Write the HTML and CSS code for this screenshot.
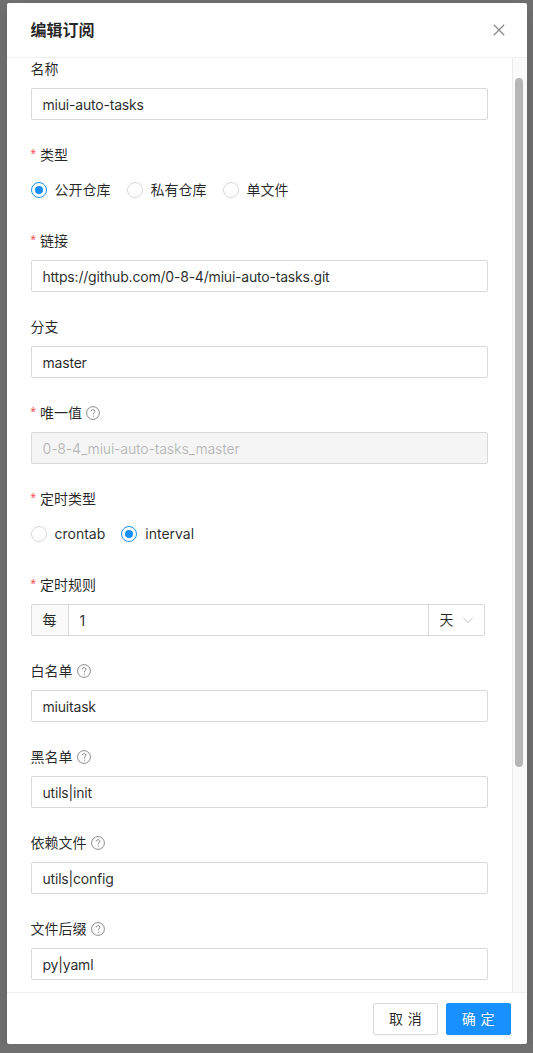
FILE: index.html
```html
<!DOCTYPE html>
<html lang="zh-CN">
  <head>
    <meta charset="UTF-8" />
    <meta name="viewport" content="width=device-width, initial-scale=1.0" />
    <title>编辑订阅</title>
    <link rel="stylesheet" href="styles.css">
  </head>
  <body>
    <div class="modal">
      <div class="modal-header">
        <div class="modal-title">编辑订阅</div>
        <button class="modal-close" type="button" aria-label="关闭">
          <svg width="12" height="12" viewBox="0 0 12 12">
            <path d="M0.8 0.8 L11.2 11.2 M11.2 0.8 L0.8 11.2" stroke="currentColor" stroke-width="1.3" fill="none" />
          </svg>
        </button>
      </div>

      <div class="modal-body">
        <div class="modal-scroll">
          <form class="form">
            <div class="form-item">
              <div class="form-label"><label>名称</label></div>
              <input class="input" type="text" value="miui-auto-tasks" />
            </div>

            <div class="form-item">
              <div class="form-label"><label class="required">类型</label></div>
              <div class="radio-group">
                <label class="radio checked"><span class="radio-dot"></span><span>公开仓库</span></label>
                <label class="radio"><span class="radio-dot"></span><span>私有仓库</span></label>
                <label class="radio"><span class="radio-dot"></span><span>单文件</span></label>
              </div>
            </div>

            <div class="form-item">
              <div class="form-label"><label class="required">链接</label></div>
              <input class="input" type="text" value="https://github.com/0-8-4/miui-auto-tasks.git" />
            </div>

            <div class="form-item">
              <div class="form-label"><label>分支</label></div>
              <input class="input" type="text" value="master" />
            </div>

            <div class="form-item">
              <div class="form-label">
                <label class="required">唯一值</label>
                <svg class="help-icon" width="14" height="14" viewBox="0 0 14 14">
                  <circle cx="7" cy="7" r="6.4" stroke="currentColor" stroke-width="1" fill="none" />
                  <path d="M5.1 5.4 C5.1 4.3 6 3.7 7 3.7 C8.1 3.7 8.9 4.4 8.9 5.3 C8.9 6.5 7.4 6.6 7.4 7.9 L7.4 8.4" stroke="currentColor" stroke-width="1" fill="none" />
                  <circle cx="7.4" cy="10.2" r="0.65" fill="currentColor" />
                </svg>
              </div>
              <input class="input" type="text" value="0-8-4_miui-auto-tasks_master" disabled />
            </div>

            <div class="form-item">
              <div class="form-label"><label class="required">定时类型</label></div>
              <div class="radio-group">
                <label class="radio"><span class="radio-dot"></span><span>crontab</span></label>
                <label class="radio checked"><span class="radio-dot"></span><span>interval</span></label>
              </div>
            </div>

            <div class="form-item">
              <div class="form-label"><label class="required">定时规则</label></div>
              <div class="input-group">
                <span class="addon">每</span>
                <input class="input group-input" type="text" value="1" />
                <div class="select">
                  <span>天</span>
                  <svg width="12" height="12" viewBox="0 0 12 12">
                    <path d="M1.5 4 L6 8.5 L10.5 4" stroke="currentColor" stroke-width="1" fill="none" />
                  </svg>
                </div>
              </div>
            </div>

            <div class="form-item">
              <div class="form-label">
                <label>白名单</label>
                <svg class="help-icon" width="14" height="14" viewBox="0 0 14 14">
                  <circle cx="7" cy="7" r="6.4" stroke="currentColor" stroke-width="1" fill="none" />
                  <path d="M5.1 5.4 C5.1 4.3 6 3.7 7 3.7 C8.1 3.7 8.9 4.4 8.9 5.3 C8.9 6.5 7.4 6.6 7.4 7.9 L7.4 8.4" stroke="currentColor" stroke-width="1" fill="none" />
                  <circle cx="7.4" cy="10.2" r="0.65" fill="currentColor" />
                </svg>
              </div>
              <input class="input" type="text" value="miuitask" />
            </div>

            <div class="form-item">
              <div class="form-label">
                <label>黑名单</label>
                <svg class="help-icon" width="14" height="14" viewBox="0 0 14 14">
                  <circle cx="7" cy="7" r="6.4" stroke="currentColor" stroke-width="1" fill="none" />
                  <path d="M5.1 5.4 C5.1 4.3 6 3.7 7 3.7 C8.1 3.7 8.9 4.4 8.9 5.3 C8.9 6.5 7.4 6.6 7.4 7.9 L7.4 8.4" stroke="currentColor" stroke-width="1" fill="none" />
                  <circle cx="7.4" cy="10.2" r="0.65" fill="currentColor" />
                </svg>
              </div>
              <input class="input" type="text" value="utils|init" />
            </div>

            <div class="form-item">
              <div class="form-label">
                <label>依赖文件</label>
                <svg class="help-icon" width="14" height="14" viewBox="0 0 14 14">
                  <circle cx="7" cy="7" r="6.4" stroke="currentColor" stroke-width="1" fill="none" />
                  <path d="M5.1 5.4 C5.1 4.3 6 3.7 7 3.7 C8.1 3.7 8.9 4.4 8.9 5.3 C8.9 6.5 7.4 6.6 7.4 7.9 L7.4 8.4" stroke="currentColor" stroke-width="1" fill="none" />
                  <circle cx="7.4" cy="10.2" r="0.65" fill="currentColor" />
                </svg>
              </div>
              <input class="input" type="text" value="utils|config" />
            </div>

            <div class="form-item">
              <div class="form-label">
                <label>文件后缀</label>
                <svg class="help-icon" width="14" height="14" viewBox="0 0 14 14">
                  <circle cx="7" cy="7" r="6.4" stroke="currentColor" stroke-width="1" fill="none" />
                  <path d="M5.1 5.4 C5.1 4.3 6 3.7 7 3.7 C8.1 3.7 8.9 4.4 8.9 5.3 C8.9 6.5 7.4 6.6 7.4 7.9 L7.4 8.4" stroke="currentColor" stroke-width="1" fill="none" />
                  <circle cx="7.4" cy="10.2" r="0.65" fill="currentColor" />
                </svg>
              </div>
              <input class="input" type="text" value="py|yaml" />
            </div>
          </form>
        </div>
        <!-- barre de défilement dessinée à la main -->
        <div class="scrollbar">
          <div class="scrollbar-thumb"></div>
        </div>
      </div>

      <div class="modal-footer">
        <button class="btn" type="button"><span>取消</span></button>
        <button class="btn btn-primary" type="button"><span>确定</span></button>
      </div>
    </div>
  </body>
</html>
```

FILE: styles.css
```css
* {
  box-sizing: border-box;
}
body {
  margin: 0;
  padding: 3px 0 0;
  background-color: #6f6f6f;
  font-family: Inter, "Noto Sans CJK SC", sans-serif;
  font-size: 14px;
  line-height: 22px;
  color: rgba(0, 0, 0, 0.85);
}
.modal {
  width: 520px;
  margin: 0 auto;
  background-color: #fff;
  border-radius: 2px;
  box-shadow: 0 3px 6px -4px rgba(0, 0, 0, 0.12), 0 6px 16px 0 rgba(0, 0, 0, 0.08);
}
.modal-header {
  display: flex;
  align-items: center;
  justify-content: space-between;
  padding: 16px 24px;
  border-bottom: 1px solid #f0f0f0;
}
.modal-title {
  font-size: 16px;
  font-weight: 600;
  line-height: 22px;
}
.modal-close {
  width: 22px;
  height: 22px;
  margin-right: -7px;
  padding: 0;
  border: none;
  background: none;
  color: rgba(0, 0, 0, 0.45);
  display: flex;
  align-items: center;
  justify-content: center;
  cursor: pointer;
}
.modal-body {
  display: flex;
  height: 934px;
}
.modal-scroll {
  flex: 1;
  overflow: hidden;
  padding: 0 24px;
}
.scrollbar {
  width: 15px;
  background-color: #fafafa;
  border-left: 1px solid #ececec;
  padding: 20px 0 0 2px;
}
.scrollbar-thumb {
  width: 8px;
  height: 689px;
  border-radius: 4px;
  background-color: #b6b6b6;
}
.form-item {
  margin-bottom: 24px;
}
.form-label {
  display: flex;
  align-items: center;
  padding-bottom: 8px;
  height: 30px;
}
.form-label label.required::before {
  content: "*";
  display: inline-block;
  margin-right: 4px;
  color: #ff4d4f;
  font-family: "Liberation Sans", sans-serif;
  font-size: 14px;
  line-height: 1;
  vertical-align: 1px;
}
.help-icon {
  margin-left: 4px;
  color: rgba(0, 0, 0, 0.45);
}
.input {
  display: block;
  width: 100%;
  height: 32px;
  padding: 4px 11px;
  border: 1px solid #d9d9d9;
  border-radius: 2px;
  font-family: inherit;
  font-size: 14px;
  line-height: 22px;
  letter-spacing: -0.2px;
  color: rgba(0, 0, 0, 0.85);
  background-color: #fff;
  outline: none;
}
.input:disabled {
  background-color: #f5f5f5;
  color: rgba(0, 0, 0, 0.25);
}
.radio-group {
  display: flex;
  height: 32px;
  align-items: center;
}
.radio {
  display: inline-flex;
  align-items: center;
  margin-right: 8px;
  white-space: nowrap;
  cursor: pointer;
}
.radio span + span {
  padding: 0 8px;
}
.radio-dot {
  position: relative;
  width: 16px;
  height: 16px;
  border: 1px solid #d9d9d9;
  border-radius: 50%;
  background-color: #fff;
}
.radio.checked .radio-dot {
  border-color: #1890ff;
}
.radio.checked .radio-dot::after {
  content: "";
  position: absolute;
  top: 3px;
  left: 3px;
  width: 8px;
  height: 8px;
  border-radius: 50%;
  background-color: #1890ff;
}
.input-group {
  display: flex;
  height: 32px;
  margin-right: 3px;
}
.addon {
  display: flex;
  align-items: center;
  padding: 0 11px;
  background-color: #fafafa;
  border: 1px solid #d9d9d9;
  border-right: none;
  border-radius: 2px 0 0 2px;
}
.group-input {
  flex: 1;
  border-radius: 0;
}
.select {
  display: flex;
  align-items: center;
  justify-content: space-between;
  width: 56px;
  padding: 0 10px 0 11px;
  border: 1px solid #d9d9d9;
  border-left: none;
  border-radius: 0 2px 2px 0;
  color: rgba(0, 0, 0, 0.85);
}
.select svg {
  color: rgba(0, 0, 0, 0.25);
}
.modal-footer {
  display: flex;
  justify-content: flex-end;
  gap: 8px;
  padding: 10px 16px 9px;
  border-top: 1px solid #f0f0f0;
}
.btn {
  height: 32px;
  padding: 4px 15px;
  border: 1px solid #d9d9d9;
  border-radius: 2px;
  background-color: #fff;
  color: rgba(0, 0, 0, 0.85);
  font-family: inherit;
  font-size: 14px;
  line-height: 22px;
  white-space: nowrap;
  box-shadow: 0 2px 0 rgba(0, 0, 0, 0.015);
  cursor: pointer;
}
.btn span {
  letter-spacing: 0.34em;
  margin-right: -0.34em;
}
.btn-primary {
  background-color: #1890ff;
  border-color: #1890ff;
  color: #fff;
  text-shadow: 0 -1px 0 rgba(0, 0, 0, 0.12);
  box-shadow: 0 2px 0 rgba(0, 0, 0, 0.045);
}
```
